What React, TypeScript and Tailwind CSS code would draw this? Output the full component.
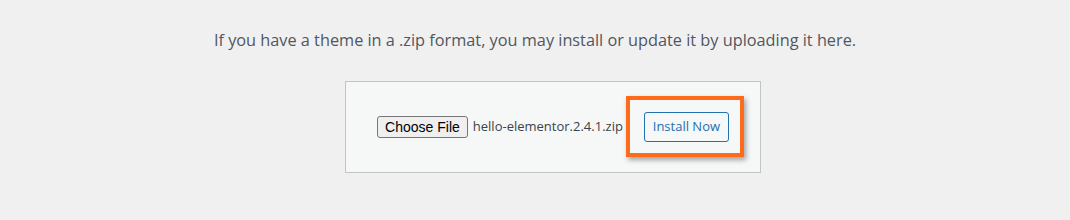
export default function App() {
    return (
        <div className="min-h-[220px] w-full bg-[#f0f0f1] font-['Open_Sans','Noto_Sans',sans-serif]">
            <div className="flex flex-col items-center pt-[29px]">
                <p className="text-[16.3px] leading-[22px] text-[#50575e]">
                    If you have a theme in a .zip format, you may install or update it by uploading it here.
                </p>

                <div className="mt-[30px] ml-[36px] flex h-[92px] w-[416px] items-center justify-center border border-[#c3c4c7] bg-[#f6f7f7]">
                    <button className="h-[22px] rounded-[3px] border border-[#767676] bg-[#efefef] px-[7px] font-['Liberation_Sans',Arial,sans-serif] text-[14px] leading-[18px] text-black">
                        Choose File
                    </button>
                    <span className="ml-[5px] text-[13px] text-[#3c434a]">hello-elementor.2.4.1.zip</span>

                    <div className="relative ml-[21px]">
                        <button className="h-[30px] w-[85px] rounded-[3px] border border-[#2271b1] bg-[#f6f7f7] text-[13px] text-[#2271b1]">
                            Install Now
                        </button>
                        <span className="pointer-events-none absolute -top-[16px] -bottom-[15px] -left-[18px] -right-[15px] border-4 border-[#fe6b1a] shadow-[2px_3px_5px_rgba(0,0,0,0.35)]"></span>
                    </div>
                </div>
            </div>
        </div>
    );
}
